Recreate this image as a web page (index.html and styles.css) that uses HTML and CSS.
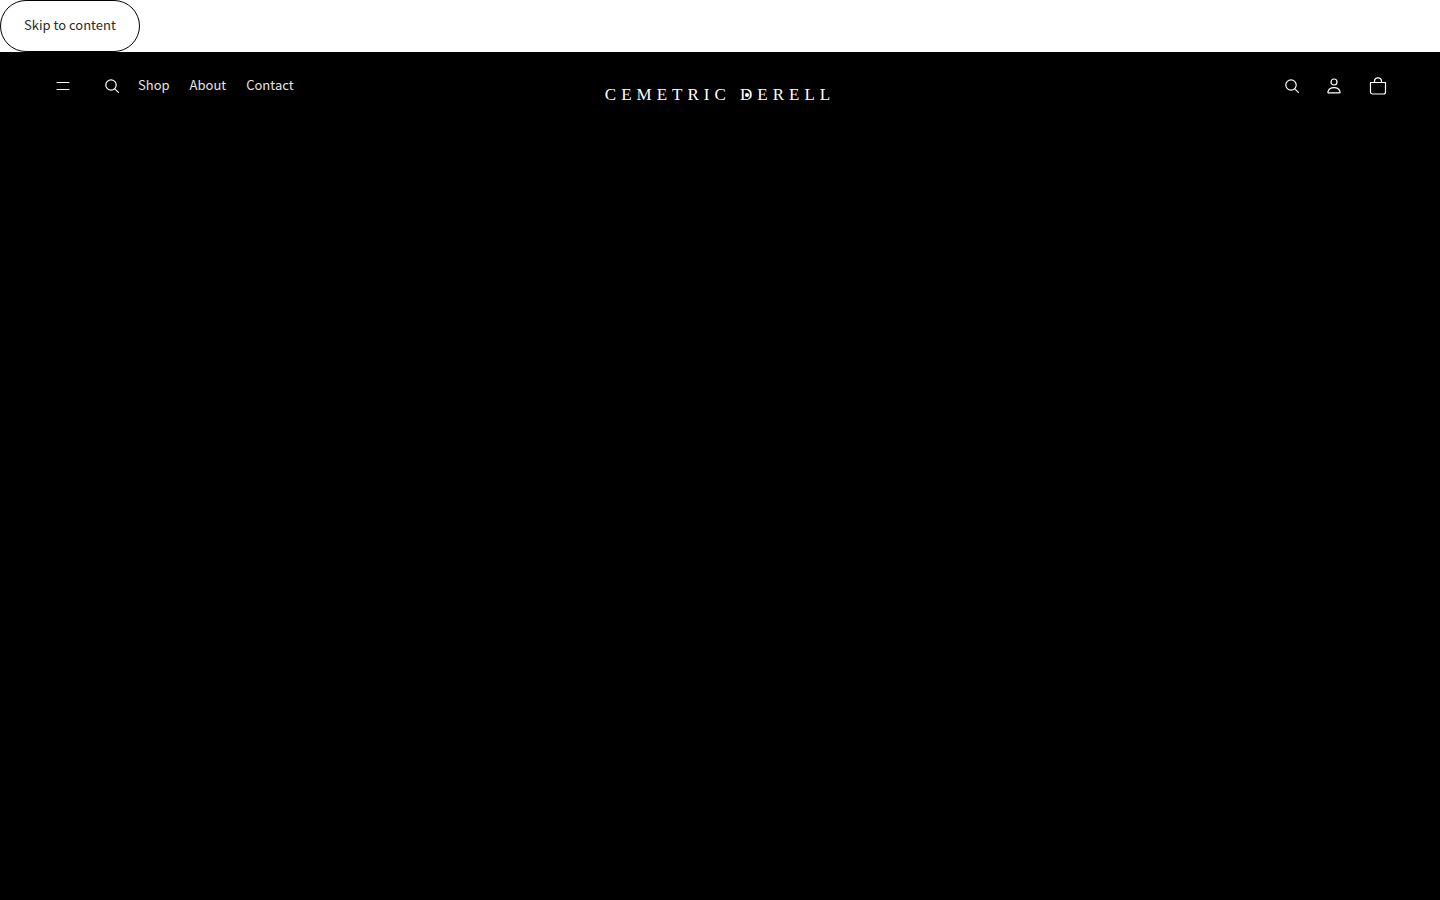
FILE: index.html
```html
<!DOCTYPE html>
<html lang="en">
  <head>
    <meta charset="utf-8">
    <meta name="viewport" content="width=device-width, initial-scale=1">
    <title>Cemetric Derell</title>
    <link rel="stylesheet" href="styles.css">
  </head>
  <body>
    <a class="skip-link" href="#content">Skip to content</a>

    <!-- Header -->
    <header class="header">
      <div class="header-left">
        <button class="icon-button" type="button" aria-label="Menu">
          <svg width="20" height="20" viewBox="0 0 20 20"><path d="M5 6.500h12M5 13.500h12" /></svg>
        </button>
        <button class="icon-button search-left" type="button" aria-label="Search">
          <svg width="20" height="20" viewBox="0 0 20 20"><circle cx="9" cy="9" r="5.200" /><path d="M12.800 12.800l3.600 3.600" /></svg>
        </button>
        <nav class="menu">
          <a href="#">Shop</a>
          <a href="#">About</a>
          <a href="#">Contact</a>
        </nav>
      </div>

      <a class="logo" href="#">CEMETRIC <span class="logo-d">D</span>ERELL</a>

      <div class="header-right">
        <button class="icon-button search-right" type="button" aria-label="Search">
          <svg width="20" height="20" viewBox="0 0 20 20"><circle cx="9" cy="9" r="5.200" /><path d="M12.800 12.800l3.600 3.600" /></svg>
        </button>
        <a class="icon-button" href="#" aria-label="Account">
          <svg width="20" height="20" viewBox="0 0 20 20"><circle cx="10" cy="6" r="3" /><path d="M4.500 16.800c-.5 0-.7-.3-.6-.8C4.400 13.500 6.500 11.600 10 11.600s5.600 1.900 6.100 4.400c.1.5-.1.8-.6.800z" /></svg>
        </a>
        <button class="icon-button" type="button" aria-label="Cart">
          <svg width="20" height="20" viewBox="0 0 20 20"><path d="M2.500 6.500h15v9.500a2 2 0 0 1-2 2h-11a2 2 0 0 1-2-2zM6.500 6.500V5.300a3.500 3.500 0 0 1 7 0v1.200" /></svg>
        </button>
      </div>
    </header>

    <main id="content" class="hero"></main>
  </body>
</html>
```

FILE: styles.css
```css
body {
  margin: 0;
  min-height: 100vh;
  display: flex;
  flex-direction: column;
  align-items: stretch;
  background: #fff;
  font-family: "Noto Sans CJK JP", "Noto Sans", sans-serif;
  font-size: 13px;
  line-height: 20px;
}

.skip-link {
  align-self: flex-start;
  padding: 14px 23px 16px;
  border: 1px solid #000;
  border-radius: 26px;
  color: #2a2a2a;
  text-decoration: none;
}

.header {
  display: grid;
  grid-template-columns: 1fr auto 1fr;
  align-items: start;
  padding: 12px 40px;
  background: #000;
  color: #fff;
}

.header-left,
.header-right {
  display: flex;
  align-items: center;
}

.header-right {
  justify-content: flex-end;
}

.icon-button {
  display: flex;
  align-items: center;
  justify-content: center;
  width: 44px;
  height: 44px;
  padding: 0;
  border: none;
  background: none;
  color: inherit;
  cursor: pointer;
}

.icon-button svg {
  fill: none;
  stroke: currentColor;
  stroke-width: 1.2;
  stroke-linecap: round;
  stroke-linejoin: round;
}

.search-left {
  margin-left: 6px;
}

.search-right {
  width: 40px;
}

.menu {
  display: flex;
  gap: 20px;
  margin-left: 4px;
  padding-bottom: 2px;
}

.menu a {
  color: #e6e6e6;
  text-decoration: none;
}

.logo {
  padding: 21px 0 20px;
  color: #fff;
  font-family: "Liberation Serif", serif;
  font-size: 17px;
  line-height: 20px;
  letter-spacing: 5px;
  text-decoration: none;
  white-space: nowrap;
}

.logo-d {
  position: relative;
}

/* dot inside the D */
.logo-d::after {
  content: "";
  position: absolute;
  left: 5px;
  top: 8px;
  width: 4px;
  height: 4px;
  border-radius: 50%;
  background: #fff;
}

.hero {
  flex: 1;
  background: #000;
}
```
